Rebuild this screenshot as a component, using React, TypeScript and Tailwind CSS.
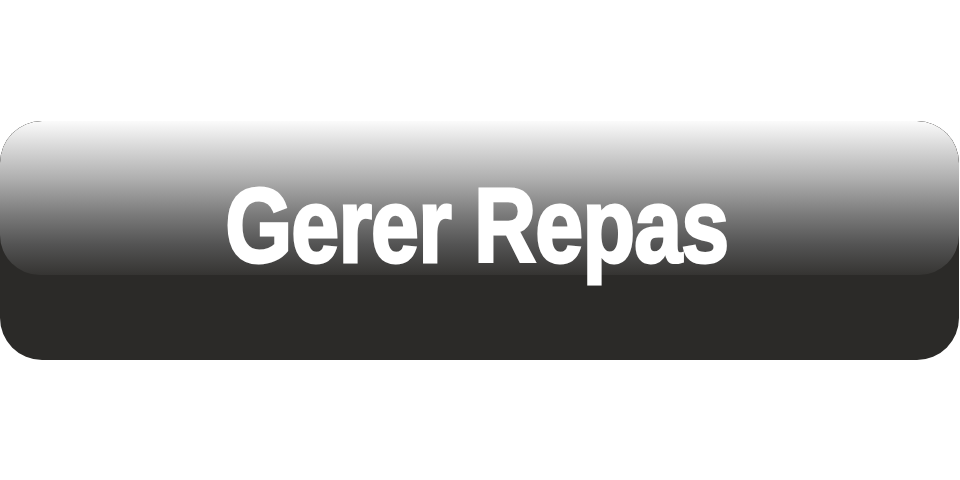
export default function App() {
  return (
    <div className="w-[960px] h-[480px] bg-white pt-[121px]">
      <div className="relative w-[959px] h-[239px] rounded-[42px] bg-[#2b2a28] overflow-hidden">
        <div className="h-[154px] w-full rounded-t-[42px] rounded-b-[40px] bg-[linear-gradient(to_bottom,#fbfbfb_0%,#d6d6d6_18%,#aeaeae_38%,#7c7c7c_60%,#545454_80%,#353432_100%)]" />
        <div className="absolute inset-x-0 top-[52px] flex justify-center pr-[6px]">
          <span
            className="text-white font-bold leading-none text-[105px] tracking-[-1px] scale-x-[0.82] [-webkit-text-stroke:3px_white]"
            style={{ fontFamily: '"Liberation Sans", Arial, sans-serif' }}
          >
            Gerer Repas
          </span>
        </div>
      </div>
    </div>
  );
}
